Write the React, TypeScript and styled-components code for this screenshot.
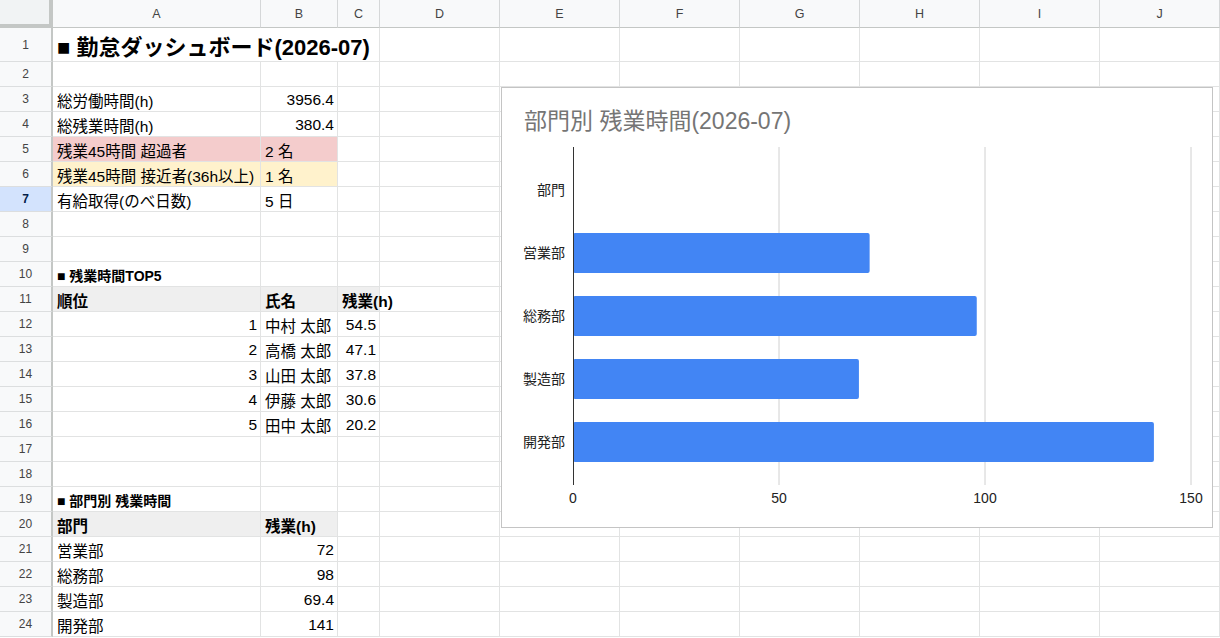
import React from "react";
import styled, { createGlobalStyle } from "styled-components";

const GlobalStyle = createGlobalStyle`
  html, body {
    margin: 0;
    padding: 0;
    background: #fff;
  }
  body {
    font-family: "Liberation Sans", Arial, "Noto Sans CJK JP", sans-serif;
    overflow: hidden;
  }
`;

const COLS = "53px 208px 77px 42px repeat(7, 120px)";
const LETTERS = ["A", "B", "C", "D", "E", "F", "G", "H", "I", "J"];
const ROW_COUNT = 24;
const SELECTED_ROW = 7;

const PINK = "#f4cccc";
const YELLOW = "#fff2cc";
const HEAD = "#efefef";

type CellData = {
  text?: string;
  align?: "left" | "right";
  bold?: boolean;
  fill?: string;
  size?: number;
  span?: number;
  spill?: boolean;
};

type RowCells = Partial<Record<string, CellData>>;

const rows: Record<number, RowCells> = {
  1: { A: { text: "■ 勤怠ダッシュボード(2026-07)", bold: true, size: 22, span: 3 } },
  3: { A: { text: "総労働時間(h)" }, B: { text: "3956.4", align: "right" } },
  4: { A: { text: "総残業時間(h)" }, B: { text: "380.4", align: "right" } },
  5: { A: { text: "残業45時間 超過者", fill: PINK }, B: { text: "2 名", fill: PINK } },
  6: { A: { text: "残業45時間 接近者(36h以上)", fill: YELLOW }, B: { text: "1 名", fill: YELLOW } },
  7: { A: { text: "有給取得(のべ日数)" }, B: { text: "5 日" } },
  10: { A: { text: "■ 残業時間TOP5", bold: true, size: 14 } },
  11: {
    A: { text: "順位", bold: true, fill: HEAD },
    B: { text: "氏名", bold: true, fill: HEAD },
    C: { text: "残業(h)", bold: true, fill: HEAD, spill: true },
  },
  12: { A: { text: "1", align: "right" }, B: { text: "中村 太郎" }, C: { text: "54.5", align: "right" } },
  13: { A: { text: "2", align: "right" }, B: { text: "高橋 太郎" }, C: { text: "47.1", align: "right" } },
  14: { A: { text: "3", align: "right" }, B: { text: "山田 太郎" }, C: { text: "37.8", align: "right" } },
  15: { A: { text: "4", align: "right" }, B: { text: "伊藤 太郎" }, C: { text: "30.6", align: "right" } },
  16: { A: { text: "5", align: "right" }, B: { text: "田中 太郎" }, C: { text: "20.2", align: "right" } },
  19: { A: { text: "■ 部門別 残業時間", bold: true, size: 14 } },
  20: {
    A: { text: "部門", bold: true, fill: HEAD },
    B: { text: "残業(h)", bold: true, fill: HEAD },
  },
  21: { A: { text: "営業部" }, B: { text: "72", align: "right" } },
  22: { A: { text: "総務部" }, B: { text: "98", align: "right" } },
  23: { A: { text: "製造部" }, B: { text: "69.4", align: "right" } },
  24: { A: { text: "開発部" }, B: { text: "141", align: "right" } },
};

const departments = [
  { name: "部門", hours: 0 },
  { name: "営業部", hours: 72 },
  { name: "総務部", hours: 98 },
  { name: "製造部", hours: 69.4 },
  { name: "開発部", hours: 141 },
];

export default function App() {
  return (
    <>
      <GlobalStyle />
      <Sheet>
        <Row $height={28}>
          <Corner />
          {LETTERS.map((l) => (
            <ColHead key={l}>{l}</ColHead>
          ))}
        </Row>
        {Array.from({ length: ROW_COUNT }, (_, i) => i + 1).map((n) => (
          <SheetRow key={n} n={n} cells={rows[n] ?? {}} />
        ))}
        <DeptChart />
      </Sheet>
    </>
  );
}

function SheetRow({ n, cells }: { n: number; cells: RowCells }) {
  const out: React.ReactNode[] = [];
  let skip = 0;
  LETTERS.forEach((l) => {
    if (skip > 0) {
      skip--;
      return;
    }
    const c = cells[l] ?? {};
    if (c.span && c.span > 1) skip = c.span - 1;
    out.push(
      <Cell
        key={l}
        $align={c.align}
        $bold={c.bold}
        $fill={c.fill}
        $size={c.size}
        $span={c.span}
        $spill={c.spill}
      >
        {c.text}
      </Cell>
    );
  });
  return (
    <Row $height={n === 1 ? 34 : 25}>
      <RowNum $active={n === SELECTED_ROW}>{n}</RowNum>
      {out}
    </Row>
  );
}

// plot geometry, in svg coordinates
const AXIS_X = 71;
const PX_PER_HOUR = 4.12;
const PLOT_TOP = 9;
const PLOT_BOTTOM = 347;
const FIRST_BAND = 52;
const BAND = 63;
const BAR_H = 40;
const TICKS = [0, 50, 100, 150];

function DeptChart() {
  return (
    <ChartPanel>
      <ChartTitle>部門別 残業時間(2026-07)</ChartTitle>
      <svg width={710} height={389} style={{ display: "block" }}>
        {TICKS.slice(1).map((t) => {
          const x = AXIS_X + t * PX_PER_HOUR;
          return <line key={t} x1={x} x2={x} y1={PLOT_TOP} y2={PLOT_BOTTOM} stroke="#d0d0d0" strokeWidth={1} />;
        })}
        {departments.map((d, i) => {
          const cy = FIRST_BAND + i * BAND;
          return (
            <g key={d.name}>
              <text x={63} y={cy + 5} textAnchor="end" fontSize={14} fill="#222" fontFamily='"Liberation Sans", "Noto Sans CJK JP", sans-serif'>
                {d.name}
              </text>
              {d.hours > 0 && (
                <rect x={AXIS_X} y={cy - BAR_H / 2} width={d.hours * PX_PER_HOUR} height={BAR_H} rx={2} fill="#4285f4" />
              )}
            </g>
          );
        })}
        <line x1={AXIS_X + 0.5} x2={AXIS_X + 0.5} y1={PLOT_TOP} y2={PLOT_BOTTOM} stroke="#333" strokeWidth={1} />
        {TICKS.map((t) => (
          <text key={t} x={AXIS_X + t * PX_PER_HOUR} y={365} textAnchor="middle" fontSize={14} fill="#222" fontFamily='"Liberation Sans", sans-serif'>
            {t}
          </text>
        ))}
      </svg>
    </ChartPanel>
  );
}

const Sheet = styled.div`
  position: relative;
  width: 1220px;
  height: 638px;
  overflow: hidden;
  background: #fff;
`;

const Row = styled.div<{ $height: number }>`
  display: grid;
  grid-template-columns: ${COLS};
  height: ${(p) => p.$height}px;
`;

const Corner = styled.div`
  background: #f1f3f4;
  border-right: 4px solid #c4c7c5;
  border-bottom: 4px solid #c4c7c5;
  box-sizing: border-box;
`;

const ColHead = styled.div`
  display: flex;
  align-items: center;
  justify-content: center;
  background: #f8f9fa;
  border-right: 1px solid #d5d7d8;
  border-bottom: 1px solid #c4c7c5;
  box-sizing: border-box;
  font-size: 12.5px;
  color: #444;
`;

const RowNum = styled.div<{ $active?: boolean }>`
  display: flex;
  align-items: center;
  justify-content: center;
  background: ${(p) => (p.$active ? "#d3e3fd" : "#f8f9fa")};
  border-right: 2px solid #c4c7c5;
  border-bottom: 1px solid #dcdedf;
  box-sizing: border-box;
  font-size: 12px;
  font-weight: ${(p) => (p.$active ? 700 : 400)};
  color: ${(p) => (p.$active ? "#041e49" : "#444")};
`;

const Cell = styled.div<{
  $align?: "left" | "right";
  $bold?: boolean;
  $fill?: string;
  $size?: number;
  $span?: number;
  $spill?: boolean;
}>`
  grid-column: span ${(p) => p.$span ?? 1};
  position: relative;
  z-index: ${(p) => (p.$spill ? 1 : 0)};
  display: flex;
  align-items: center;
  justify-content: ${(p) => (p.$align === "right" ? "flex-end" : "flex-start")};
  min-width: 0;
  padding: 1px 3px 0 4px;
  box-sizing: border-box;
  background: ${(p) => p.$fill ?? "#fff"};
  border-right: 1px solid #e2e3e3;
  border-bottom: 1px solid #e2e3e3;
  font-size: ${(p) => p.$size ?? 15.5}px;
  font-weight: ${(p) => (p.$bold ? 700 : 400)};
  color: #000;
  white-space: nowrap;
  overflow: visible;
`;

const ChartPanel = styled.div`
  position: absolute;
  left: 501px;
  top: 87px;
  z-index: 2;
  width: 712px;
  height: 441px;
  box-sizing: border-box;
  background: #fff;
  border: 1px solid #c4c4c4;
`;

const ChartTitle = styled.div`
  height: 50px;
  box-sizing: border-box;
  padding: 20px 0 0 22px;
  font-size: 23px;
  line-height: 26px;
  color: #757575;
  white-space: nowrap;
`;
